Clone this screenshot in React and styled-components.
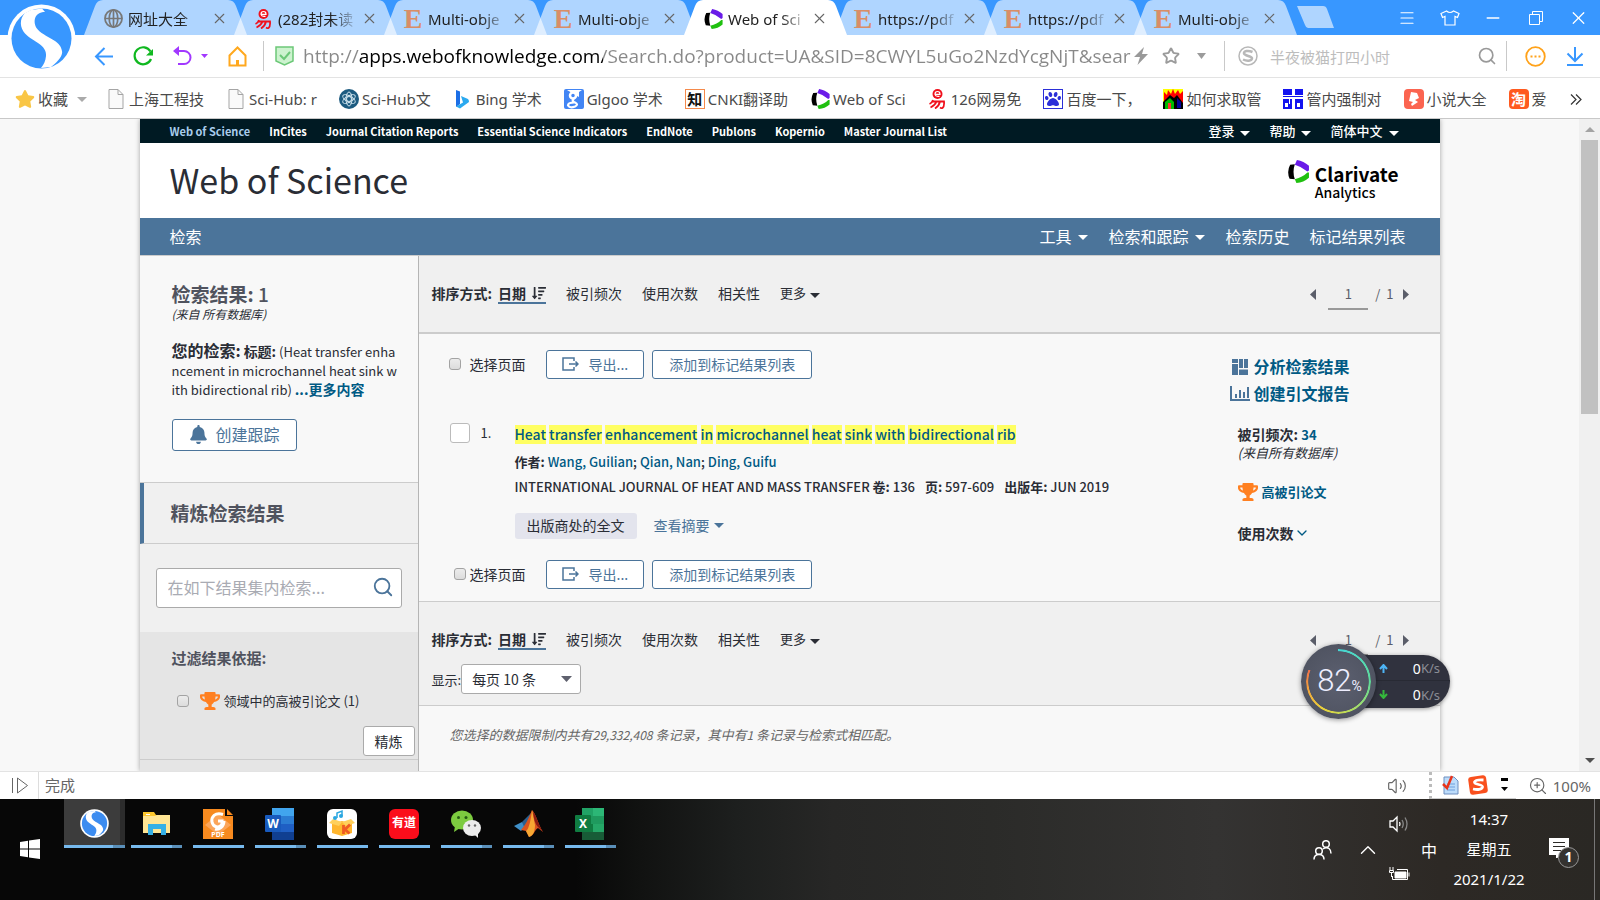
import React from 'react';
import styled, { createGlobalStyle } from 'styled-components';
import { FaBell, FaSortAmountDown, FaTrophy, FaStar, FaPaw } from 'react-icons/fa';
import { Search, X, Menu, Minus, Star, ChevronDown, ChevronUp, ZoomIn, Volume2 } from 'lucide-react';

const PAGE_FONT = '"Noto Sans CJK SC", sans-serif';
const CHROME_FONT = '"Noto Sans", "Noto Sans CJK SC", sans-serif';

const GlobalStyle = createGlobalStyle`
  * {
    box-sizing: border-box;
  }
  body {
    margin: 0;
    overflow: hidden;
    font-family: ${CHROME_FONT};
  }
  a {
    color: inherit;
    text-decoration: none;
  }
  button,
  input,
  select {
    font-family: inherit;
    color: inherit;
    margin: 0;
  }
`;

const Desktop = styled.div`
  display: flex;
  flex-direction: column;
  height: 100vh;
  background: #fff;
`;

const IconButton = styled.button`
  display: flex;
  align-items: center;
  justify-content: center;
  flex: none;
  margin-left: ${({ $before }) => $before || 0}px;
  margin-right: ${({ $after }) => $after || 0}px;
  padding: 0;
  border: 0;
  background: none;
  color: ${({ $color }) => $color || 'inherit'};
  cursor: pointer;
`;

/* ---------- browser window ---------- */

const BrowserTop = styled.header`
  position: relative;
  flex: none;
`;

const BrowserLogo = styled.svg`
  position: absolute;
  left: 7px;
  top: 4px;
  z-index: 5;
`;

const TitleBar = styled.div`
  display: flex;
  height: 35px;
  padding-left: 84px;
  background: #3897ff;
`;

const TabItem = styled.div`
  position: relative;
  display: flex;
  align-items: center;
  flex: none;
  width: 163px;
  height: 35px;
  padding: 2px 19px 0 19px;
  margin-right: -13px;
  z-index: ${({ $active }) => ($active ? 2 : 1)};
  &::before {
    content: '';
    position: absolute;
    inset: 0;
    z-index: -1;
    background: ${({ $active }) => ($active ? '#fff' : 'rgba(255, 255, 255, 0.6)')};
    clip-path: path('M0 35 L11 6 Q13 0 19 0 H144 Q150 0 152 6 L163 35 Z');
  }
`;

const TabIcon = styled.span`
  display: flex;
  justify-content: center;
  flex: none;
  width: 20px;
  margin-right: 5px;
`;

const TabText = styled.a`
  flex: 1;
  margin-right: 3px;
  overflow: hidden;
  white-space: nowrap;
  font-size: 15px;
  line-height: 24px;
  color: #222;
  mask-image: linear-gradient(90deg, #000 66%, rgba(0, 0, 0, 0.15) 96%);
`;

const ElsevierMark = styled.span`
  font-family: 'Liberation Serif', serif;
  font-size: 28px;
  font-weight: 700;
  line-height: 24px;
  color: #d98d66;
`;

const NewTab = styled.button`
  width: 37px;
  height: 22px;
  margin: 6px 0 0 13px;
  padding: 0;
  border: 0;
  background: rgba(255, 255, 255, 0.6);
  clip-path: path('M0 0 H26 Q29 0 30 3 L37 22 H11 Q9 22 8 19 Z');
`;

const WindowControls = styled.div`
  display: flex;
  align-items: center;
  gap: 22px;
  margin-left: auto;
  padding-right: 11px;
  color: #fff;
  button {
    width: 21px;
  }
`;

const AddressBar = styled.div`
  display: flex;
  align-items: center;
  height: 43px;
  padding: 0 16px 0 94px;
  border-bottom: 1px solid #e3e3e3;
`;

const NavGroup = styled.div`
  display: flex;
  align-items: center;
  gap: ${({ $gap }) => $gap || 20}px;
`;

const Divider = styled.span`
  flex: none;
  width: 1px;
  height: 30px;
  margin: 0 ${({ $after }) => $after}px 0 ${({ $before }) => $before}px;
  background: #c9c9c9;
`;

const UrlInput = styled.input`
  flex: 1;
  min-width: 0;
  height: 32px;
  margin: 0 3px 0 9px;
  padding: 0;
  border: 0;
  outline: 0;
  font-family: 'Open Sans', sans-serif;
  font-size: 19px;
  color: #888;
  -webkit-text-fill-color: transparent;
  background: linear-gradient(90deg, #888 56px, #000 56px, #000 300px, #888 300px);
  background-clip: text;
`;

const UrlTools = styled.div`
  display: flex;
  align-items: center;
  gap: 14px;
  color: #9b9b9b;
`;

const QuickSearch = styled.input`
  width: 207px;
  margin-left: 12px;
  padding: 2px 0 0;
  border: 0;
  outline: 0;
  background: none;
  font-size: 15px;
  &::placeholder {
    color: #bdbdbd;
    opacity: 1;
  }
`;

const BookmarkBar = styled.nav`
  display: flex;
  align-items: center;
  height: 41px;
  padding: 2px 18px 0 15px;
  border-bottom: 1px solid #c8c8c8;
`;

const BookmarkList = styled.div`
  display: flex;
  flex: 1;
  min-width: 0;
  gap: 22px;
  overflow: hidden;
  margin-right: 23px;
`;

const Bookmark = styled.a`
  display: flex;
  align-items: center;
  flex: none;
  gap: 3px;
  font-size: 15px;
  line-height: 24px;
  color: #4a4a4a;
  white-space: nowrap;
`;

const BookmarkIcon = styled.span`
  display: flex;
  align-items: center;
  justify-content: center;
  width: 20px;
  height: 20px;
`;

const GlyphTile = styled.span`
  display: flex;
  align-items: center;
  justify-content: center;
  width: 20px;
  height: 20px;
  border: ${({ $border }) => ($border ? `1px solid ${$border}` : 0)};
  border-radius: ${({ $radius }) => $radius || 0}px;
  background: ${({ $bg }) => $bg || 'none'};
  color: ${({ $fg }) => $fg || '#fff'};
  font-size: 15px;
  font-weight: 700;
  line-height: 18px;
`;

/* ---------- page ---------- */

const Viewport = styled.div`
  display: flex;
  flex: 1;
  min-height: 0;
  overflow: hidden;
  background: #f8f8f8;
  font-family: ${PAGE_FONT};
  color: #2a2d35;
`;

const Scroller = styled.div`
  flex: 1;
  min-width: 0;
  overflow: hidden;
`;

const ScrollTrack = styled.div`
  display: flex;
  flex-direction: column;
  align-items: center;
  width: 21px;
  background: #f0f0f0;
`;

const ScrollThumb = styled.div`
  flex: 0 0 42%;
  width: 17px;
  background: #c1c1c1;
`;

const ScrollArrow = styled.button`
  width: 21px;
  height: 21px;
  padding: 0;
  border: 0;
  background: none;
  line-height: 0;
  color: ${({ $color }) => $color};
  margin-top: ${({ $end }) => ($end ? 'auto' : 0)};
`;

const Page = styled.div`
  display: flex;
  flex-direction: column;
  max-width: 1300px;
  height: 100%;
  margin: 0 auto;
  box-shadow: 0 0 5px rgba(0, 0, 0, 0.35);
`;

const ProductBar = styled.nav`
  display: flex;
  flex: none;
  align-items: center;
  gap: 19px;
  height: 24px;
  padding: 0 41px 0 30px;
  background: #001a23;
  color: #fff;
  font-size: 11px;
  font-weight: 700;
  line-height: 24px;
`;

const ProductLink = styled.a`
  color: ${({ $current }) => ($current ? '#a9ccec' : '#fff')};
`;

const MenuLink = styled.a`
  display: flex;
  align-items: center;
  gap: ${({ $gap }) => $gap || 6}px;
  font-size: ${({ $size }) => $size || 13}px;
  font-weight: ${({ $weight }) => $weight || 400};
  svg {
    margin-top: 4px;
  }
`;

const Spacer = styled.span`
  flex: 1;
`;

const Masthead = styled.div`
  display: flex;
  flex: none;
  align-items: center;
  justify-content: space-between;
  height: 75px;
  padding: 0 41px 2px 30px;
  background: #fff;
`;

const SiteTitle = styled.h1`
  margin: 0;
  font-size: 34px;
  font-weight: 400;
  line-height: 48px;
  color: #2a2d35;
`;

const Clarivate = styled.a`
  display: flex;
  align-items: flex-start;
  gap: 6px;
  color: #000;
`;

const ClarivateName = styled.span`
  display: flex;
  flex-direction: column;
  padding-top: 4px;
  font-size: 19px;
  font-weight: 700;
  line-height: 20px;
  small {
    font-size: 14px;
    font-weight: 500;
    line-height: 16px;
  }
`;

const MainNav = styled.nav`
  display: flex;
  flex: none;
  align-items: center;
  gap: 20px;
  height: 37px;
  padding: 0 34px 2px 30px;
  background: #4b749a;
  color: #fff;
  font-size: 16px;
`;

const Columns = styled.div`
  display: flex;
  flex: 1;
  min-height: 0;
  border-top: 1px solid #ccc;
`;

const Sidebar = styled.aside`
  display: flex;
  flex: none;
  flex-direction: column;
  width: 279px;
  border-right: 1px solid #b5b5b5;
`;

const Summary = styled.section`
  height: 227px;
  padding: 25px 20px 0 32px;
  border-bottom: 1px solid #ccc;
`;

const ResultCount = styled.h2`
  margin: 0;
  font-size: 19px;
  font-weight: 700;
  line-height: 26px;
  color: #50535e;
  span {
    font-weight: 500;
  }
`;

const Source = styled.em`
  display: block;
  font-size: ${({ $size }) => $size || 12}px;
  font-weight: 400;
  line-height: 14px;
`;

const Query = styled.p`
  margin: 20px 0;
  font-size: 13px;
  line-height: 19px;
  word-break: break-all;
  strong {
    font-size: 14px;
  }
  b {
    font-size: 16px;
  }
  a {
    font-size: 14px;
    font-weight: 700;
    color: #005a84;
  }
`;

const OutlineButton = styled.button`
  display: flex;
  align-items: center;
  justify-content: center;
  gap: ${({ $gap }) => $gap || 8}px;
  height: ${({ $height }) => $height || 29}px;
  padding: 0 ${({ $pad }) => $pad || 16}px 2px;
  border: 1px solid #4b749a;
  border-radius: 3px;
  background: #fff;
  color: #4b749a;
  font-size: ${({ $size }) => $size || 14}px;
  line-height: 20px;
`;

const RefineHead = styled.h3`
  margin: 0;
  height: 61px;
  padding-left: 27px;
  border-left: 4px solid #4b749a;
  border-bottom: 1px solid #ccc;
  background: #f0f0f0;
  font-size: 19px;
  line-height: 60px;
  color: #50535e;
`;

const SearchWithin = styled.form`
  flex: none;
  padding: 24px 16px;
  background: #f0f0f0;
`;

const SearchField = styled.div`
  display: flex;
  align-items: center;
  height: 40px;
  padding: 0 7px 2px 11px;
  border: 1px solid #aaa;
  border-radius: 3px;
  background: #fff;
  color: #4b749a;
  input {
    flex: 1;
    min-width: 0;
    padding: 0;
    border: 0;
    outline: 0;
    font-size: 16px;
  }
  input::placeholder {
    color: #a9abb3;
    opacity: 1;
  }
`;

const Filters = styled.section`
  display: flex;
  flex-direction: column;
  flex: 1;
  background: #e5e5e5;
`;

const FilterBody = styled.div`
  display: flex;
  flex-direction: column;
  height: 128px;
  padding: 14px 3px 3px 32px;
  border-bottom: 1px solid #ccc;
  h4 {
    margin: 0 0 19px;
    font-size: 15px;
    line-height: 24px;
    color: #50535e;
  }
`;

const FilterRow = styled.label`
  display: flex;
  align-items: center;
  gap: 4px;
  padding-left: 5px;
  font-size: 13px;
  line-height: 24px;
  input {
    margin-right: 7px;
  }
`;

const RefineButton = styled.button`
  align-self: flex-end;
  flex: none;
  width: 52px;
  height: 30px;
  margin-top: auto;
  padding: 0;
  border: 1px solid #aaa;
  border-radius: 3px;
  background: #fff;
  font-size: 14px;
`;

const Checkbox = styled.input.attrs({ type: 'checkbox' })`
  appearance: none;
  flex: none;
  width: ${({ $large }) => ($large ? 20 : 12)}px;
  height: ${({ $large }) => ($large ? 20 : 12)}px;
  border: 1px solid ${({ $large }) => ($large ? '#bbb' : '#a3a3a3')};
  border-radius: 3px;
  background: ${({ $large }) => ($large ? '#fff' : 'linear-gradient(#ececec, #dcdcdc)')};
`;

const Main = styled.main`
  flex: 1;
  min-width: 0;
  background: #f8f8f8;
`;

const SortPanel = styled.section`
  height: ${({ $height }) => $height}px;
  padding: 25px 31px 0 13px;
  border-bottom: ${({ $rule }) => $rule}px solid #ccc;
  background: #f0f0f0;
`;

const SortRow = styled.div`
  display: flex;
  align-items: center;
  gap: 20px;
  height: 24px;
  font-size: 14px;
  line-height: 20px;
`;

const SortLabel = styled.strong`
  margin-right: -14px;
`;

const SortCurrent = styled.a`
  display: flex;
  align-items: center;
  gap: 6px;
  margin-top: 2px;
  line-height: 18px;
  font-weight: 700;
  border-bottom: 2px solid #4b749a;
`;

const Pager = styled.div`
  display: flex;
  align-items: center;
  gap: 7px;
  margin: 2px 0 0 auto;
  font-size: 13px;
  color: #5a5d69;
  input {
    width: 40px;
    height: 32px;
    margin-left: 5px;
    padding: 0;
    border: 0;
    border-bottom: 2px solid #999;
    background: none;
    font-size: 13px;
    text-align: center;
  }
  span {
    padding-right: 2px;
  }
`;

const ShowRow = styled.label`
  display: flex;
  align-items: center;
  margin-top: 13px;
  font-size: 13px;
`;

const SelectBox = styled.span`
  display: flex;
  align-items: center;
  position: relative;
  select {
    appearance: none;
    width: 120px;
    height: 30px;
    padding: 0 10px;
    border: 1px solid #aaa;
    border-radius: 3px;
    background: #fff;
    font-size: 14px;
  }
  svg {
    position: absolute;
    right: 9px;
    pointer-events: none;
    color: #5f616e;
  }
`;

const Results = styled.section`
  display: flex;
  justify-content: space-between;
  height: 268px;
  border-bottom: 1px solid #ccc;
`;

const ResultsLeft = styled.div`
  padding-top: 16px;
`;

const ActionRow = styled.div`
  display: flex;
  align-items: center;
  gap: 8px;
  padding-left: ${({ $indent }) => $indent}px;
`;

const SelectPage = styled.label`
  display: flex;
  align-items: center;
  gap: ${({ $gap }) => $gap}px;
  margin-right: 12px;
  padding-bottom: 2px;
  font-size: 14px;
  line-height: 20px;
`;

const Record = styled.article`
  display: flex;
  align-items: flex-start;
  margin: 44px 0 21px;
  padding-left: 31px;
`;

const RecordNumber = styled.span`
  width: 34px;
  margin-left: 11px;
  font-size: 13px;
  line-height: 20px;
`;

const RecordBody = styled.div`
  padding-top: 2px;
  font-size: 13px;
  font-weight: 500;
`;

const RecordTitle = styled.h3`
  margin: 0 0 8px;
  font-size: 14px;
  font-weight: 500;
  line-height: 19px;
  color: #005a84;
  mark {
    display: inline-block;
    background: #ffff62;
    color: inherit;
  }
`;

const RecordLine = styled.p`
  margin: 0 0 5px;
  line-height: 20px;
  a {
    color: #005a84;
  }
  span {
    margin-left: 7px;
  }
`;

const RecordLinks = styled.div`
  display: flex;
  align-items: center;
  gap: 17px;
  margin-top: 16px;
  font-weight: 400;
`;

const FullText = styled.button`
  height: 26px;
  padding: 0 12px 2px;
  border: 0;
  border-radius: 3px;
  background: #e3e4ed;
  font-size: 14px;
`;

const AbstractToggle = styled.button`
  display: flex;
  align-items: center;
  gap: 4px;
  padding: 0 0 2px;
  border: 0;
  background: none;
  color: #4b749a;
  font-size: 14px;
`;

const Insights = styled.div`
  flex: none;
  width: 210px;
  padding-top: 19px;
`;

const InsightLink = styled.a`
  display: flex;
  align-items: center;
  gap: 4px;
  font-size: 16px;
  font-weight: 700;
  line-height: 27px;
  color: #005a84;
  svg {
    width: 20px;
    color: #4b749a;
  }
`;

const Metrics = styled.div`
  padding: 16px 0 0 8px;
  font-size: 14px;
  font-weight: 700;
  line-height: 22px;
  a {
    font-size: 13px;
    color: #005a84;
  }
`;

const HighlyCited = styled.a`
  display: flex;
  align-items: center;
  gap: 4px;
  margin: 21px 0 20px;
`;

const UsageToggle = styled.button`
  display: flex;
  align-items: center;
  padding: 0;
  border: 0;
  background: none;
  font-size: 14px;
  font-weight: 700;
`;

const Note = styled.p`
  margin: 18px 0 0 31px;
  font-size: 13px;
  font-style: italic;
  line-height: 22px;
  color: #666;
  span {
    font-size: 12px;
  }
`;

/* ---------- speed widget ---------- */

const SpeedWidget = styled.div`
  position: absolute;
  right: 150px;
  bottom: 181px;
  z-index: 10;
  display: flex;
  align-items: center;
`;

const Gauge = styled.div`
  position: relative;
  z-index: 1;
  display: flex;
  align-items: baseline;
  justify-content: center;
  width: 75px;
  height: 75px;
  padding-left: 2px;
  border-radius: 50%;
  background: radial-gradient(#5c6070, #505462 70%, #454854);
  box-shadow: 0 1px 5px rgba(0, 0, 0, 0.4);
  color: #eef;
  font-family: Roboto, sans-serif;
  font-size: 31px;
  font-weight: 300;
  line-height: 73px;
  small {
    font-size: 14px;
    font-weight: 400;
  }
  &::before {
    content: '';
    position: absolute;
    inset: 5px;
    border-radius: 50%;
    background: conic-gradient(#46d6d6, #5fdc9a 25%, #b9dc5a 45%, #e8d23c 58%, #f2a93c 70%, #f0704a 81%, transparent 81%);
    mask: radial-gradient(closest-side, transparent 92%, #000 94%);
  }
`;

const Rates = styled.div`
  width: 91px;
  margin-left: -17px;
  height: 53px;
  border-radius: 0 27px 27px 0;
  background: #30323e;
  box-shadow: 0 1px 4px rgba(0, 0, 0, 0.4);
`;

const Rate = styled.div`
  display: flex;
  align-items: center;
  height: 26px;
  padding: 1px 10px 0 20px;
  color: #fff;
  font-size: 14px;
  &:first-child {
    border-bottom: 1px solid #282a34;
  }
  svg {
    margin-right: auto;
    color: ${({ $color }) => $color};
  }
  small {
    font-size: 13px;
    color: #8b8d96;
  }
`;

/* ---------- bottom bars ---------- */

const StatusBar = styled.footer`
  display: flex;
  flex: none;
  align-items: center;
  height: 28px;
  padding: 0 9px 0 11px;
  border-top: 1px solid #e3e3e3;
  background: #fff;
  color: #666;
  font-size: 15px;
`;

const StatusText = styled.span`
  margin-left: 9px;
  padding-left: 6px;
  border-left: 1px solid #ddd;
  line-height: 27px;
`;

const ZoomLevel = styled.span`
  margin-left: 5px;
  line-height: 24px;
`;

const ImeTray = styled.div`
  display: flex;
  align-items: center;
  gap: 9px;
  height: 27px;
  margin: 0 12px 0 22px;
  padding: 0 8px 0 10px;
  border-left: 3px dotted #bbb;
  border-bottom: 1px solid #ccc;
  svg:last-child {
    margin-left: 4px;
  }
`;

const Taskbar = styled.footer`
  display: flex;
  flex: none;
  height: 101px;
  background: linear-gradient(90deg, #070707 36%, #111211 40%, #1d1f1e 46%, #272726 52%, #2b2b29 62%, #343332 76%, #2d2925 90%, #2a2824);
  color: #fff;
`;

const StartButton = styled(IconButton)`
  width: 64px;
  height: 101px;
  padding: 0 4px 2px 0;
`;

const TaskList = styled.div`
  display: flex;
  gap: 11px;
`;

const Task = styled.button`
  display: flex;
  align-items: center;
  justify-content: center;
  width: ${({ $active }) => ($active ? 61 : 51)}px;
  height: 49px;
  margin-right: ${({ $active }) => ($active ? -5 : 0)}px;
  padding: 3px 1px 0 0;
  border: solid #76b9ed;
  border-width: 0 0 3px;
  border-image: ${({ $stacked }) =>
    $stacked ? 'linear-gradient(90deg, #76b9ed 80%, #5a8fb9 80%) 1' : 'none'};
  background: ${({ $active }) =>
    $active ? 'linear-gradient(90deg, #3c3c3c 92%, #2c2c2c 92%)' : 'none'};
`;

const YoudaoTile = styled.span`
  width: 30px;
  height: 30px;
  border-radius: 6px;
  background: #fb0d1b;
  color: #fff;
  font-size: 12px;
  font-weight: 700;
  line-height: 28px;
  text-align: center;
`;

const Tray = styled.div`
  display: flex;
  align-items: center;
  margin-left: auto;
`;

const TrayStack = styled.div`
  display: flex;
  flex-direction: column;
  gap: 34px;
  margin: 0 11px 4px 8px;
`;

const Clock = styled.time`
  width: 84px;
  margin: 0 18px 2px 10px;
  font-size: 15px;
  line-height: 30px;
  text-align: center;
`;

const Notifications = styled.button`
  position: relative;
  width: 38px;
  height: 32px;
  margin-right: 7px;
  padding: 0;
  border: 0;
  background: none;
  color: #fff;
  text-align: left;
`;

const NoticeCount = styled.span`
  position: absolute;
  left: 9px;
  top: 13px;
  width: 21px;
  height: 21px;
  border: 1px solid #999;
  border-radius: 50%;
  background: #34322f;
  font-size: 14px;
  font-weight: 700;
  line-height: 18px;
  text-align: center;
`;

const TrayEdge = styled.span`
  align-self: stretch;
  width: 6px;
  border-left: 1px solid #777;
`;

const ImeMode = styled.span`
  font-family: ${PAGE_FONT};
  font-size: 16px;
`;

/* ---------- drawings ---------- */

function Arrow({ size = 10, height = 5, up = false }) {
  return (
    <svg width={size} height={height} viewBox="0 0 10 6" preserveAspectRatio="none" fill="currentColor">
      <path d={up ? 'M0 6h10L5 0z' : 'M0 0h10L5 6z'} />
    </svg>
  );
}

function SideArrow({ left }) {
  return (
    <svg width="6" height="11" viewBox="0 0 6 11" fill="#5a5d69">
      <path d={left ? 'M6 0v11L0 5.5z' : 'M0 0v11l6-5.5z'} />
    </svg>
  );
}

function ClarivateMark({ width = 19, height = 20 }) {
  return (
    <svg width={width} height={height} viewBox="0 0 20 22">
      <path d="M6.500 4 2 4.500Q-1.500 11 1.500 18L6.500 18.500Q4 11 6.500 4z" fill="#000" />
      <path d="M8.500 0Q15 1 20 5.500v4.500l-1.500 1Q13.500 6.500 6.500 4.500z" fill="#6a1be8" />
      <path d="M20 12v5q-5 4.500-12 5l-1.500-3.500Q14 16.500 18.500 12z" fill="#20c010" />
    </svg>
  );
}

function NeteaseMark() {
  return (
    <svg width="17" height="20" viewBox="0 0 17 20" fill="none" stroke="#f0101c">
      <circle cx="8.500" cy="5" r="5" fill="#f0101c" stroke="none" />
      <path d="M6 5.300h5Q11 2.500 8.500 2.500T6 5.500q.5 2.500 4.500 1.800" stroke="#fff" strokeWidth="1.200" />
      <path d="M4 11Q3 14 .5 15M3 12.500h12q.5 5-1.500 6.500-1 .5-2.500-.5M7.500 12.500Q6 16.500 1.500 18.500M11 12.500q-1 4.500-5 7" strokeWidth="1.800" />
    </svg>
  );
}

function SogouSwirl({ base = '#3897ff' }) {
  return (
    <>
      <circle cx="34.500" cy="34.500" r="34" fill="#fff" />
      <circle cx="34.500" cy="34.500" r="30" fill={base} />
      <path
        d="M18 9C12 15 13 24 18 29.500c5 5 9 6.500 13 9.500 6 4 8.500 8 8 13-.5 5-2 8-5 12l10-1C52 57 56 51 55 47c-1-6-5-9-9.500-11.500C40 32 33 29 29.500 24 26 18 27 8 38 8L35 4.500 24 6z"
        fill="#fff"
      />
    </>
  );
}

function PageIcon() {
  return (
    <svg width="16" height="20" viewBox="0 0 16 20" fill="#fafafa" stroke="#a5a5a5">
      <path d="M1 .5h9l5 5v14H1z" />
      <path d="M10 .5v5h5" fill="none" />
    </svg>
  );
}

function GlobeIcon() {
  return (
    <svg width="19" height="19" viewBox="0 0 20 20" fill="none" stroke="#777" strokeWidth="1.800">
      <circle cx="10" cy="10" r="9" />
      <ellipse cx="10" cy="10" rx="4.500" ry="9" />
      <path d="M10 1v18M1 10h18" />
    </svg>
  );
}

function BackIcon() {
  return (
    <svg width="19" height="19" viewBox="0 0 19 19" fill="none" stroke="#3897ff" strokeWidth="2">
      <path d="M10.500 1 2 9.500l8.500 8.500M2 9.500h17" />
    </svg>
  );
}

function ReloadIcon() {
  return (
    <svg width="20" height="20" viewBox="0 0 20 20" fill="none" stroke="#10b820" strokeWidth="2.200">
      <path d="M17.500 5.500A8.500 8.500 0 1 0 18 13" />
      <path d="M20 3v6.500h-7z" fill="#10b820" stroke="none" />
    </svg>
  );
}

function UndoIcon() {
  return (
    <svg width="20" height="20" viewBox="0 0 20 20" fill="none" stroke="#a238ff" strokeWidth="2">
      <path d="M4 5h7a6.500 6.500 0 0 1 0 13H5" />
      <path d="M0 5 6 0v10z" fill="#a238ff" stroke="none" />
    </svg>
  );
}

function HomeIcon() {
  return (
    <svg width="19" height="21" viewBox="0 0 19 21" fill="none" stroke="#ffa81e" strokeWidth="2">
      <path d="M1.500 9.500 9.500 1.500l8 8V19.500h-16z" />
      <path d="M9.500 14v6" strokeWidth="3" />
    </svg>
  );
}

function ShieldIcon() {
  return (
    <svg width="19" height="20" viewBox="0 0 19 20" fill="#cdf3cf" stroke="#6cc878" strokeWidth="1.500">
      <path d="M1 1h17v14l-8.500 4L1 15z" />
      <path d="m5 9 4 4 6-7" fill="none" strokeWidth="2" />
    </svg>
  );
}

function BoltIcon() {
  return (
    <svg width="14" height="18" viewBox="0 0 14 18" fill="#999">
      <path d="M10 0 0 10h6L3.500 18 14 7H8z" />
    </svg>
  );
}

function SogouSearchIcon() {
  return (
    <svg width="20" height="20" viewBox="0 0 20 20" fill="none" stroke="#b8b8b8" strokeWidth="1.500">
      <circle cx="10" cy="10" r="9" />
      <path d="M14.500 6C10 4 5.500 5 6 7.500S14.500 10 14 12.500 9 15.500 5 13.500" strokeWidth="2.500" />
    </svg>
  );
}

function MoreIcon() {
  return (
    <svg width="21" height="21" viewBox="0 0 21 21" fill="none" stroke="#ffa21a" strokeWidth="1.800">
      <circle cx="10.500" cy="10.500" r="9.300" />
      <path d="M5.500 10.500h2M9.500 10.500h2M13.500 10.500h2" strokeWidth="2" />
    </svg>
  );
}

function DownloadIcon() {
  return (
    <svg width="18" height="19" viewBox="0 0 18 19" fill="none" stroke="#3897ff" strokeWidth="2">
      <path d="M9 0v13.500M1.500 6.500 9 14l7.500-7.500M1 18h16" />
    </svg>
  );
}

function ShirtIcon() {
  return (
    <svg width="20" height="16" viewBox="0 0 20 16" fill="none" stroke="#fff" strokeWidth="1.200">
      <path d="M6.500 1 1 3.500 2.500 7.500 5 6.500V15h10V6.500l2.500 1L19 3.500 13.500 1q-3.500 3-7 0z" />
    </svg>
  );
}

function RestoreIcon() {
  return (
    <svg width="14" height="14" viewBox="0 0 14 14" fill="none" stroke="#fff">
      <path d="M.5 3.500h10v10H.500zM3.500 3V.500h10v10H11" />
    </svg>
  );
}

function DoubleChevron() {
  return (
    <svg width="12" height="11" viewBox="0 0 12 11" fill="none" stroke="currentColor" strokeWidth="1.200">
      <path d="m1 .5 5 5-5 5M6 .5l5 5-5 5" />
    </svg>
  );
}

function SciHubIcon() {
  return (
    <svg width="20" height="20" viewBox="0 0 20 20" fill="none" stroke="#cfe4ee">
      <circle cx="10" cy="10" r="10" fill="#1d5b80" stroke="none" />
      <circle cx="10" cy="10" r="2.500" />
      <ellipse cx="10" cy="10" rx="3" ry="7" />
      <ellipse cx="10" cy="10" rx="3" ry="7" transform="rotate(60 10 10)" />
      <ellipse cx="10" cy="10" rx="3" ry="7" transform="rotate(120 10 10)" />
    </svg>
  );
}

function BingIcon() {
  return (
    <svg width="13" height="19" viewBox="0 0 13 19">
      <path d="M0 0 4 1.500V14L0 17z" fill="#1b6ee6" />
      <path d="m5 6 7 3q1 1 1 3L4 18.500 0 16.500l7-4z" fill="#2ba9ef" />
    </svg>
  );
}

function GlgooIcon() {
  return (
    <svg width="20" height="20" viewBox="0 0 20 20" fill="none">
      <rect width="20" height="20" rx="2" fill="#4285f4" />
      <path d="M3 1h15l-3 2v5l-2-1" fill="#fff" />
      <circle cx="9" cy="6.500" r="3" fill="#4285f4" stroke="#fff" strokeWidth="2.500" />
      <path d="M10 10q-3 2 1 3.500 4 2 0 4-5 2-7-1 0-3 6-3" stroke="#fff" strokeWidth="2.200" />
    </svg>
  );
}

function RoofIcon() {
  return (
    <svg width="20" height="20" viewBox="0 0 20 20">
      <path fill="#ff0" d="M0 0h20v20H0z" />
      <path d="M1 3 4 6 5 1l3 4 2-5 2 5 3-4 2 4 3-3v12H1z" fill="#f00" />
      <path d="M0 13 7 6l4 3 3-3 6 8v6H0z" fill="#000" />
      <path d="M2 13 7 9l4 4v7H2z" fill="#0b0" />
      <path d="m14 9 4 4v6h-4z" fill="#009" />
      <path d="M5 14h3v6H5z" fill="#f33" />
    </svg>
  );
}

function PipeIcon() {
  return (
    <svg width="20" height="20" viewBox="0 0 20 20" fill="#1313f0">
      <path d="M0 0h9v6H0zM12 0h8v6h-8zM0 10h9v10H0zM12 10h8v10h-8zM0 7h20v1H0z" />
      <path d="M2 14h3v4H2zM14 14h3v4h-3zM6 10h1v5H6z" fill="#fff" />
    </svg>
  );
}

function NovelIcon() {
  return (
    <svg width="20" height="20" viewBox="0 0 20 20">
      <rect width="20" height="20" rx="4" fill="#fb6450" />
      <path d="m7 3 6 1 2 5-4 2 3 2-6 4-1-2 2-2-4-1z" fill="#fff" />
    </svg>
  );
}

function ExportIcon() {
  return (
    <svg width="17" height="14" viewBox="0 0 17 14" fill="none" stroke="#4b749a" strokeWidth="1.500">
      <path d="M12 4V1H1v12h11v-3M7 7h9M13.500 4.500 16 7l-2.500 2.500" />
    </svg>
  );
}

function AnalyzeIcon() {
  return (
    <svg width="16" height="16" viewBox="0 0 16 16" fill="#4b749a">
      <path d="M0 0h6v4H0zM0 5h6v11H0zM7 0h4v9H7zM12 0h4v9h-4zM7 10.500h9V16H7z" />
    </svg>
  );
}

function ChartIcon() {
  return (
    <svg width="20" height="16" viewBox="0 0 20 16" fill="#4b749a">
      <path d="M0 0h2v13h18v2H0zM5 8h2v4H5zM9 4h2v8H9zM13 6h2v6h-2zM17 1h2v11h-2z" />
    </svg>
  );
}

function RateArrow({ down }) {
  return (
    <svg width="9" height="9" viewBox="0 0 9 9" fill="none" stroke="currentColor" strokeWidth="2">
      <path d={down ? 'M4.500 0v8M1 4l3.500 4L8 4' : 'M4.500 9V1M1 5l3.500-4L8 5'} />
    </svg>
  );
}

function WindowsIcon() {
  return (
    <svg width="20" height="20" viewBox="0 0 20 20" fill="#fff">
      <path d="M0 3 8 1.800V9.500H0zM9 1.600 20 0v9.500H9zM0 10.500h8v7.700L0 17zM9 10.500h11V20L9 18.400z" />
    </svg>
  );
}

function SogouTaskIcon() {
  return (
    <svg width="29" height="29" viewBox="0 0 69 69">
      <SogouSwirl base="#3c8cf0" />
    </svg>
  );
}

function FolderIcon() {
  return (
    <svg width="27" height="24" viewBox="0 0 27 24">
      <path d="M0 0h11l2 3h13v5H0z" fill="#fdc72e" />
      <path d="M3 2h4v1H3z" fill="#fff" />
      <path d="M0 4h12l2-1h13v18H0z" fill="#ffe594" />
      <path d="M5 12h18v11h-5v-6h-8v6H5z" fill="#35b0e6" />
    </svg>
  );
}

function FoxitIcon() {
  return (
    <svg width="30" height="30" viewBox="0 0 30 30">
      <path d="M0 0h22v7h8v23H0z" fill="#f78a1f" />
      <path d="m24 0 6 6h-6z" fill="#f78a1f" />
      <path d="m2 16 13-11 13 11-13 10z" fill="#fba55a" />
      <path d="M20 5.500C12 3 8 8 9 13c1 5 7 7 10 2v-3h-4M21 12c0 6-5 9-9 8" fill="none" stroke="#fff" strokeWidth="3" />
      <text x="15" y="28" fontSize="7" fontWeight="700" fill="#fff" textAnchor="middle">PDF</text>
    </svg>
  );
}

function OfficeIcon({ letter, tones, plate }) {
  return (
    <svg width="30" height="32" viewBox="0 0 30 32">
      {tones.map((tone, i) => (
        <rect key={tone} x="7" y={i * 8} width="22" height="8" fill={tone} />
      ))}
      {letter === 'X' && <path d="M18 0h11v8H18zM18 16h11v8H18z" fill="#33c481" fillOpacity=".6" />}
      <rect y="7" width="16" height="17" rx="1" fill={plate} />
      <text x="8" y="20" fontSize="12" fontWeight="700" fill="#fff" textAnchor="middle">{letter}</text>
    </svg>
  );
}

function MusicBoxIcon() {
  return (
    <svg width="30" height="30" viewBox="0 0 30 30">
      <rect width="30" height="30" rx="6" fill="#fff" />
      <path d="M5 15 15 12l10 3v9l-10 3-10-3z" fill="#ffb62e" />
      <path d="m2 14 4-4 9 3-3 4zM28 14l-4-4-9 3 4 4z" fill="#ffd05c" />
      <path d="M10 9V4l5-2v5" fill="none" stroke="#2aa6e0" strokeWidth="1.500" />
      <circle cx="8" cy="9" r="2" fill="#2aa6e0" />
      <circle cx="14" cy="7" r="2" fill="#2aa6e0" />
      <path d="M16.500 16v9M23 15.500l-5 5 4.500 4" stroke="#ef5b24" strokeWidth="2.800" fill="none" />
    </svg>
  );
}

function WeChatIcon() {
  return (
    <svg width="30" height="28" viewBox="0 0 30 28">
      <ellipse cx="11" cy="10" rx="11" ry="9.500" fill="#7ccb3f" />
      <path d="m4 16-1 6 6-4z" fill="#7ccb3f" />
      <ellipse cx="21" cy="18" rx="9" ry="8" fill="#ececec" />
      <path d="m23 24 4 4 0-7z" fill="#ececec" />
      <circle cx="7.500" cy="7.500" r="1.500" fill="#245c12" />
      <circle cx="15" cy="7.500" r="1.500" fill="#245c12" />
      <circle cx="18" cy="15.500" r="1.200" fill="#666" />
      <circle cx="24" cy="15.500" r="1.200" fill="#666" />
    </svg>
  );
}

function MatlabIcon() {
  return (
    <svg width="29" height="27" viewBox="0 0 29 27">
      <path d="m0 16 8-4 5 3-6 6z" fill="#3f8fc8" />
      <path d="M8 12 17 3l-2 12-4 4z" fill="#2a5f8f" />
      <path d="M18 0c-2 5-5 13-11 20l5 1 3 6c5-1 6-8 9-9l5 4C24 14 22 4 18 0z" fill="#d9531e" />
      <path d="M18 0c-1 9-3 19-6 21l3 6c5-1 6-8 6-12z" fill="#f7a833" />
      <path d="M19 2c1 8 2 12 6 16l4 4C24 14 22 4 19 2z" fill="#8a1c12" />
    </svg>
  );
}

function PeopleIcon() {
  return (
    <svg width="19" height="20" viewBox="0 0 19 20" fill="none" stroke="#fff" strokeWidth="1.500">
      <circle cx="13" cy="4" r="3.300" />
      <circle cx="6" cy="11" r="3.300" />
      <path d="M1 19.500q0-5 5-5t5 5M10 9q3-2.500 6-.500 2 1.500 2 5" />
    </svg>
  );
}

function SpeakerIcon() {
  return (
    <svg width="21" height="18" viewBox="0 0 21 18" fill="none" stroke="#fff" strokeWidth="1.300">
      <path d="M1 6h3l4-4v14l-4-4H1zM10.500 7q1 2 0 4" />
      <path d="M13 5q2.500 4 0 8M16 2.500q4 6.500 0 13" stroke="#888" />
    </svg>
  );
}

function BatteryIcon() {
  return (
    <svg width="21" height="14" viewBox="0 0 21 14" fill="none" stroke="#fff">
      <path d="M8 2.500h10.500v10h-15V9M20 5.500v4" />
      <path d="M6 5h11v6H6z" fill="#fff" />
      <path d="M1 0v3M4 0v3M.5 3.500h4v2h-4zM2.500 6v4" />
    </svg>
  );
}

function NoticeIcon() {
  return (
    <svg width="20" height="20" viewBox="0 0 20 20">
      <path d="M0 0h20v17h-8l-5 4v-4H0z" fill="#fff" />
      <path d="M4 4.500h12M4 8.500h12M4 12.500h8" stroke="#2d2b28" strokeWidth="1.200" />
    </svg>
  );
}

function StatusPlayIcon() {
  return (
    <svg width="18" height="17" viewBox="0 0 18 17" fill="none" stroke="#666">
      <path d="M1.500 1v15M6.500 1v15l10-7.500z" />
    </svg>
  );
}

function ImeSwirl() {
  return (
    <svg width="20" height="20" viewBox="0 0 20 20">
      <rect x="1" y="1" width="18" height="18" rx="3" fill="#f9501e" transform="rotate(-8 10 10)" />
      <path d="M15.500 5q-8-.5-9 2c-.5 3 8.500 2 8 5-.5 2.500-5 3-9.500 2" fill="none" stroke="#fff" strokeWidth="2.800" />
    </svg>
  );
}

function ImeDoc() {
  return (
    <svg width="17" height="20" viewBox="0 0 17 20">
      <path d="M2 2h10l4 4v13H2z" fill="#bcdcfb" stroke="#6f8fc0" />
      <path d="M5 9h8M5 12h8M5 15h8" stroke="#6f9fdc" />
      <path d="m1 9 4 4 5-12" stroke="#e8341c" strokeWidth="2.500" fill="none" />
    </svg>
  );
}

function ImeMenuIcon() {
  return (
    <svg width="7" height="14" viewBox="0 0 7 14">
      <path d="M0 0h7v3H0zM0 9h7l-3.500 4z" />
    </svg>
  );
}

/* ---------- data ---------- */

const elsevier = <ElsevierMark>E</ElsevierMark>;

const tabs = [
  { text: '网址大全', icon: <GlobeIcon /> },
  { text: '(282封未读', icon: <NeteaseMark /> },
  { text: 'Multi-obje', icon: elsevier },
  { text: 'Multi-obje', icon: elsevier },
  { text: 'Web of Sci', icon: <ClarivateMark />, active: true },
  { text: 'https://pdf', icon: elsevier },
  { text: 'https://pdf', icon: elsevier },
  { text: 'Multi-obje', icon: elsevier },
];

const bookmarks = [
  { text: '上海工程技', icon: <PageIcon /> },
  { text: 'Sci-Hub: r', icon: <PageIcon /> },
  { text: 'Sci-Hub文', icon: <SciHubIcon /> },
  { text: 'Bing 学术', icon: <BingIcon /> },
  { text: 'Glgoo 学术', icon: <GlgooIcon /> },
  { text: 'CNKI翻译助', icon: <GlyphTile $border="#f58a4b" $fg="#111">知</GlyphTile> },
  { text: 'Web of Sci', icon: <ClarivateMark /> },
  { text: '126网易免', icon: <NeteaseMark /> },
  {
    text: '百度一下，',
    icon: <GlyphTile $border="#2b2fd8" $fg="#2b2fd8"><FaPaw size={16} /></GlyphTile>,
  },
  { text: '如何求取管', icon: <RoofIcon /> },
  { text: '管内强制对', icon: <PipeIcon /> },
  { text: '小说大全', icon: <NovelIcon /> },
  { text: '爱淘', icon: <GlyphTile $bg="#ff5a1f" $radius={4}>淘</GlyphTile> },
];

const products = [
  'Web of Science',
  'InCites',
  'Journal Citation Reports',
  'Essential Science Indicators',
  'EndNote',
  'Publons',
  'Kopernio',
  'Master Journal List',
];

const title = 'Heat transfer enhancement in microchannel heat sink with bidirectional rib';

const tasks = [
  { name: 'Sogou', icon: <SogouTaskIcon />, active: true, stacked: true },
  { name: 'Explorer', icon: <FolderIcon />, stacked: true },
  { name: 'Foxit', icon: <FoxitIcon /> },
  {
    name: 'Word',
    icon: <OfficeIcon letter="W" plate="#185abd" tones={['#41a5ee', '#2b7cd3', '#1f5fc4', '#103f91']} />,
    stacked: true,
  },
  { name: 'Music', icon: <MusicBoxIcon /> },
  { name: 'Youdao', icon: <YoudaoTile>有道</YoudaoTile> },
  { name: 'WeChat', icon: <WeChatIcon />, stacked: true },
  { name: 'MATLAB', icon: <MatlabIcon />, stacked: true },
  {
    name: 'Excel',
    icon: <OfficeIcon letter="X" plate="#107c41" tones={['#21a366', '#1f9a5e', '#107c41', '#185c37']} />,
    stacked: true,
  },
];

/* ---------- sections ---------- */

function BrowserHeader() {
  return (
    <BrowserTop>
      <BrowserLogo width="69" height="69" viewBox="0 0 69 69">
        <SogouSwirl />
      </BrowserLogo>
      <TitleBar>
        {tabs.map((tab, i) => (
          <TabItem key={i} $active={tab.active}>
            <TabIcon>{tab.icon}</TabIcon>
            <TabText href="#">{tab.text}</TabText>
            <IconButton aria-label="Close tab" $color="#666">
              <X size={17} strokeWidth={1.5} />
            </IconButton>
          </TabItem>
        ))}
        <NewTab aria-label="New tab" />
        <WindowControls>
          <IconButton aria-label="Menu"><Menu size={18} strokeWidth={1.6} /></IconButton>
          <IconButton aria-label="Skin"><ShirtIcon /></IconButton>
          <IconButton aria-label="Minimize"><Minus size={20} strokeWidth={1.6} /></IconButton>
          <IconButton aria-label="Restore"><RestoreIcon /></IconButton>
          <IconButton aria-label="Close"><X size={22} strokeWidth={1.5} /></IconButton>
        </WindowControls>
      </TitleBar>
      <AddressBar>
        <NavGroup>
          <IconButton aria-label="Back"><BackIcon /></IconButton>
          <IconButton aria-label="Reload"><ReloadIcon /></IconButton>
          <NavGroup $gap={8}>
            <IconButton aria-label="Undo"><UndoIcon /></IconButton>
            <IconButton aria-label="Undo list" $color="#a238ff"><Arrow size={7} height={4} /></IconButton>
          </NavGroup>
          <IconButton aria-label="Home"><HomeIcon /></IconButton>
        </NavGroup>
        <Divider $before={16} $after={11} />
        <ShieldIcon />
        <UrlInput
          aria-label="Address"
          defaultValue="http://apps.webofknowledge.com/Search.do?product=UA&SID=8CWYL5uGo2NzdYcgNjT&sear"
        />
        <UrlTools>
          <BoltIcon />
          <IconButton aria-label="Bookmark"><Star size={18} strokeWidth={2.5} /></IconButton>
          <IconButton aria-label="History" $before={3}><Arrow size={9} height={6} /></IconButton>
        </UrlTools>
        <Divider $before={18} $after={13} />
        <SogouSearchIcon />
        <QuickSearch aria-label="Quick search" placeholder="半夜被猫打四小时" />
        <IconButton aria-label="Search" $color="#999"><Search size={20} /></IconButton>
        <Divider $before={9} $after={18} />
        <IconButton aria-label="More" $after={20}><MoreIcon /></IconButton>
        <IconButton aria-label="Downloads"><DownloadIcon /></IconButton>
      </AddressBar>
      <BookmarkBar>
        <Bookmark href="#"><FaStar size={20} color="#f9c646" />收藏</Bookmark>
        <IconButton aria-label="Favourites" $color="#aaa" $before={9} $after={19}><Arrow /></IconButton>
        <BookmarkList>
          {bookmarks.map((item) => (
            <Bookmark key={item.text} href="#">
              <BookmarkIcon>{item.icon}</BookmarkIcon>
              {item.text}
            </Bookmark>
          ))}
        </BookmarkList>
        <IconButton aria-label="More bookmarks" $color="#333"><DoubleChevron /></IconButton>
      </BookmarkBar>
    </BrowserTop>
  );
}

function SortControls() {
  return (
    <SortRow>
      <SortLabel>排序方式:</SortLabel>
      <SortCurrent href="#">日期 <FaSortAmountDown size={14} /></SortCurrent>
      <a href="#">被引频次</a>
      <a href="#">使用次数</a>
      <a href="#">相关性</a>
      <MenuLink href="#" $gap={4}>更多 <Arrow /></MenuLink>
      <Pager>
        <IconButton aria-label="Previous page"><SideArrow left /></IconButton>
        <input aria-label="Page number" defaultValue="1" />
        <span>/&nbsp; 1</span>
        <IconButton aria-label="Next page"><SideArrow /></IconButton>
      </Pager>
    </SortRow>
  );
}

function PageActions({ indent, gap }) {
  return (
    <ActionRow $indent={indent}>
      <SelectPage $gap={gap}><Checkbox />选择页面</SelectPage>
      <OutlineButton $gap={10} $pad={15}><ExportIcon />导出...</OutlineButton>
      <OutlineButton>添加到标记结果列表</OutlineButton>
    </ActionRow>
  );
}

function LeftPanel() {
  return (
    <Sidebar>
      <Summary>
        <ResultCount>检索结果: <span>1</span></ResultCount>
        <Source>(来自 所有数据库)</Source>
        <Query>
          <b>您的检索:</b> <strong>标题:</strong> (Heat transfer enhancement in microchannel heat sink with bidirectional rib) <a href="#">...更多内容</a>
        </Query>
        <OutlineButton $height={32} $size={16}><FaBell size={19} />创建跟踪</OutlineButton>
      </Summary>
      <RefineHead>精炼检索结果</RefineHead>
      <SearchWithin>
        <SearchField>
          <input aria-label="Search within results" placeholder="在如下结果集内检索..." />
          <IconButton type="button" aria-label="Search within"><Search size={22} strokeWidth={2} /></IconButton>
        </SearchField>
      </SearchWithin>
      <Filters>
        <FilterBody>
          <h4>过滤结果依据:</h4>
          <FilterRow>
            <Checkbox />
            <FaTrophy size={20} color="#ff8021" />
            领域中的高被引论文 (1)
          </FilterRow>
          <RefineButton>精炼</RefineButton>
        </FilterBody>
      </Filters>
    </Sidebar>
  );
}

function ResultList() {
  return (
    <Results>
      <ResultsLeft>
        <PageActions indent={30} gap={9} />
        <Record>
          <Checkbox $large aria-label="Select record 1" />
          <RecordNumber>1.</RecordNumber>
          <RecordBody>
            <RecordTitle>
              <a href="#">
                {title.split(' ').map((word, i) => (
                  <React.Fragment key={i}><mark>{word}</mark> </React.Fragment>
                ))}
              </a>
            </RecordTitle>
            <RecordLine>
              <b>作者:</b> <a href="#">Wang, Guilian</a>; <a href="#">Qian, Nan</a>; <a href="#">Ding, Guifu</a>
            </RecordLine>
            <RecordLine>
              INTERNATIONAL JOURNAL OF HEAT AND MASS TRANSFER <b>卷:</b> 136 <span><b>页:</b> 597-609</span> <span><b>出版年:</b> JUN 2019</span>
            </RecordLine>
            <RecordLinks>
              <FullText>出版商处的全文</FullText>
              <AbstractToggle>查看摘要 <Arrow /></AbstractToggle>
            </RecordLinks>
          </RecordBody>
        </Record>
        <PageActions indent={35} gap={4} />
      </ResultsLeft>
      <Insights>
        <InsightLink href="#"><AnalyzeIcon />分析检索结果</InsightLink>
        <InsightLink href="#"><ChartIcon />创建引文报告</InsightLink>
        <Metrics>
          被引频次: <a href="#">34</a>
          <Source $size={13}>(来自所有数据库)</Source>
          <HighlyCited href="#"><FaTrophy size={20} color="#ff8021" />高被引论文</HighlyCited>
          <UsageToggle>使用次数 <ChevronDown size={16} color="#005a84" /></UsageToggle>
        </Metrics>
      </Insights>
    </Results>
  );
}

function WebOfScience() {
  return (
    <Viewport>
      <Scroller>
        <Page>
          <ProductBar>
            {products.map((name, i) => (
              <ProductLink key={name} href="#" $current={i === 0}>{name}</ProductLink>
            ))}
            <Spacer />
            <MenuLink href="#" $weight={500}>登录 <Arrow /></MenuLink>
            <MenuLink href="#" $weight={500}>帮助 <Arrow /></MenuLink>
            <MenuLink href="#" $weight={500}>简体中文 <Arrow /></MenuLink>
          </ProductBar>
          <Masthead>
            <SiteTitle>Web of Science</SiteTitle>
            <Clarivate href="#">
              <ClarivateMark width={21} height={23} />
              <ClarivateName>Clarivate<small>Analytics</small></ClarivateName>
            </Clarivate>
          </Masthead>
          <MainNav>
            <a href="#">检索</a>
            <Spacer />
            <MenuLink href="#" $size={16} $gap={7}>工具 <Arrow /></MenuLink>
            <MenuLink href="#" $size={16} $gap={7}>检索和跟踪 <Arrow /></MenuLink>
            <a href="#">检索历史</a>
            <a href="#">标记结果列表</a>
          </MainNav>
          <Columns>
            <LeftPanel />
            <Main>
              <SortPanel $height={78} $rule={2}><SortControls /></SortPanel>
              <ResultList />
              <SortPanel $height={104} $rule={1}>
                <SortControls />
                <ShowRow>
                  显示:
                  <SelectBox>
                    <select defaultValue="10"><option value="10">每页 10 条</option></select>
                    <Arrow size={11} height={6} />
                  </SelectBox>
                </ShowRow>
              </SortPanel>
              <Note>您选择的数据限制内共有<span>29,332,408</span> 条记录，其中有<span>1</span> 条记录与检索式相匹配。</Note>
            </Main>
          </Columns>
        </Page>
      </Scroller>
      <ScrollTrack>
        <ScrollArrow aria-label="Scroll up" $color="#a3a3a3"><Arrow up /></ScrollArrow>
        <ScrollThumb />
        <ScrollArrow aria-label="Scroll down" $color="#505050" $end><Arrow /></ScrollArrow>
      </ScrollTrack>
    </Viewport>
  );
}

function BottomBars() {
  return (
    <>
      <StatusBar>
        <StatusPlayIcon />
        <StatusText>完成</StatusText>
        <Spacer />
        <Volume2 size={20} strokeWidth={1.4} />
        <ImeTray>
          <ImeDoc />
          <ImeSwirl />
          <ImeMenuIcon />
        </ImeTray>
        <ZoomIn size={20} strokeWidth={1.4} />
        <ZoomLevel>100%</ZoomLevel>
      </StatusBar>
      <Taskbar>
        <StartButton aria-label="Start"><WindowsIcon /></StartButton>
        <TaskList>
          {tasks.map((task) => (
            <Task key={task.name} aria-label={task.name} $active={task.active} $stacked={task.stacked}>
              {task.icon}
            </Task>
          ))}
        </TaskList>
        <Tray>
          <PeopleIcon />
          <IconButton aria-label="Hidden icons" $before={23}><ChevronUp size={26} strokeWidth={1.3} /></IconButton>
          <TrayStack>
            <SpeakerIcon />
            <BatteryIcon />
          </TrayStack>
          <ImeMode>中</ImeMode>
          <Clock>14:37<br />星期五<br />2021/1/22</Clock>
          <Notifications aria-label="Notifications">
            <NoticeIcon />
            <NoticeCount>1</NoticeCount>
          </Notifications>
          <TrayEdge />
        </Tray>
      </Taskbar>
    </>
  );
}

function App() {
  return (
    <Desktop>
      <GlobalStyle />
      <BrowserHeader />
      <WebOfScience />
      <BottomBars />
      <SpeedWidget>
        <Gauge>82<small>%</small></Gauge>
        <Rates>
          <Rate $color="#4db4f5"><RateArrow />0<small>K/s</small></Rate>
          <Rate $color="#35b83c"><RateArrow down />0<small>K/s</small></Rate>
        </Rates>
      </SpeedWidget>
    </Desktop>
  );
}

export default App;
